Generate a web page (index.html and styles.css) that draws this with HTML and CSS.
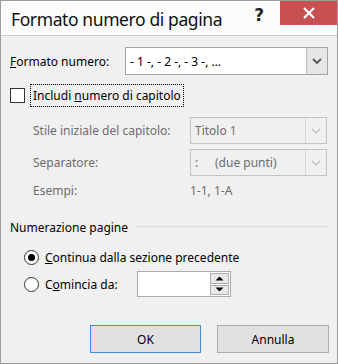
FILE: index.html
```html
<!DOCTYPE html>
<html lang="it">
<head>
<meta charset="utf-8">
<link rel="stylesheet" href="styles.css">
</head>
<body>
<div class="win">
  <div class="titlebar">
    <span class="title">Formato numero di pagina</span>
    <span class="help">?</span>
    <span class="close"><svg width="12" height="12" viewBox="0 0 12 12"><path d="M1 1L11 11M11 1L1 11" stroke="#fff" stroke-width="2.2" fill="none"/></svg></span>
  </div>
  <div class="content">
    <div class="row-format">
      <span class="lbl"><u>F</u>ormato numero:</span>
      <div class="combo">
        <span class="val">- 1 -, - 2 -, - 3 -, …</span>
        <span class="drop"><svg width="10" height="6" viewBox="0 0 10 6"><path d="M1 1L5 5L9 1" stroke="#555" stroke-width="1.8" fill="none"/></svg></span>
      </div>
    </div>
    <div class="row-check">
      <span class="checkbox"></span>
      <span class="focus"><span>Includi <u>n</u>umero di capitolo</span></span>
    </div>
    <div class="chap">
      <span class="dlbl">Stile iniziale del capitolo:</span>
      <div class="combo dis">
        <span class="val">Titolo 1</span>
        <span class="drop"><svg width="10" height="6" viewBox="0 0 10 6"><path d="M1 1L5 5L9 1" stroke="#c4c4c4" stroke-width="1.5" fill="none"/></svg></span>
      </div>
      <span class="dlbl">Separatore:</span>
      <div class="combo dis">
        <span class="val"><span class="colon">:</span>(due punti)</span>
        <span class="drop"><svg width="10" height="6" viewBox="0 0 10 6"><path d="M1 1L5 5L9 1" stroke="#c4c4c4" stroke-width="1.5" fill="none"/></svg></span>
      </div>
      <span class="dlbl">Esempi:</span>
      <span class="dlbl">1-1, 1-A</span>
    </div>
    <div class="group-head">
      <span class="gtitle">Numerazione pagine</span>
      <span class="gline"></span>
    </div>
    <div class="radios">
      <span class="radio on"></span>
      <span class="rlbl"><u>C</u>ontinua dalla sezione precedente</span>
      <span></span>
      <span class="radio"></span>
      <span class="rlbl">C<u>o</u>mincia da:</span>
      <div class="spin">
        <span class="spin-field"></span>
        <span class="spin-btns">
          <span class="sbtn"><svg width="9" height="5" viewBox="0 0 9 5"><path d="M0.5 4.5L4.5 0.5L8.5 4.5Z" fill="#000"/></svg></span>
          <span class="sbtn"><svg width="9" height="5" viewBox="0 0 9 5"><path d="M0.5 0.5L4.5 4.5L8.5 0.5Z" fill="#000"/></svg></span>
        </span>
      </div>
    </div>
    <div class="buttons">
      <span class="btn default">OK</span>
      <span class="btn">Annulla</span>
    </div>
  </div>
</div>
</body>
</html>
```
FILE: styles.css
```css
html, body {
  margin: 0;
  padding: 0;
  background: #f0f0f0;
}
body {
  font-family: "Noto Sans", "Open Sans", sans-serif;
  font-size: 12px;
  color: #000;
}
.win {
  width: 338px;
  height: 364px;
  box-sizing: border-box;
  border: 1px solid #9c9c9c;
  background: #f0f0f0;
  display: flex;
  flex-direction: column;
}
.titlebar {
  height: 34px;
  flex: none;
  background: #fbfbfb;
  border-bottom: 1px solid #cdcdcd;
  display: flex;
  align-items: flex-start;
}
.title {
  font-size: 17.5px;
  letter-spacing: -0.4px;
  line-height: 24px;
  margin: 6px 0 0 10px;
  color: #111;
  white-space: nowrap;
}
.help {
  font-family: "DejaVu Sans", sans-serif;
  font-weight: bold;
  font-size: 17px;
  line-height: 20px;
  margin: 4px 16px 0 auto;
  color: #222;
}
.close {
  width: 57px;
  height: 24px;
  background: #c75050;
  display: flex;
  align-items: center;
  justify-content: center;
}
.content {
  flex: 1;
  padding: 0 9px;
  display: flex;
  flex-direction: column;
}
.row-format {
  margin-top: 11px;
  height: 28px;
  display: flex;
  align-items: center;
}
.lbl {
  width: 115px;
  flex: none;
}
.combo {
  flex: 1;
  height: 28px;
  box-sizing: border-box;
  border: 1px solid #a5a5a5;
  background: #fff;
  display: flex;
  align-items: stretch;
}
.combo .val {
  flex: 1;
  padding-left: 4px;
  display: flex;
  align-items: center;
}
.combo .drop {
  width: 20px;
  border-left: 1px solid #bcbcbc;
  background: #e6e6e6;
  display: flex;
  align-items: center;
  justify-content: center;
}
.combo.dis {
  height: 27px;
  background: #f0f0f0;
  border-color: #c3c3c3;
  color: #6d6d6d;
}
.combo.dis .drop {
  background: #f0f0f0;
  border-left-color: #d6d6d6;
}
.colon {
  width: 20px;
  display: inline-block;
}
.row-check {
  margin-top: 9px;
  height: 23px;
  display: flex;
  align-items: center;
}
.checkbox {
  width: 15px;
  height: 15px;
  box-sizing: border-box;
  border: 1px solid #333;
  background: #fff;
}
.focus {
  margin-left: 5px;
  height: 23px;
  box-sizing: border-box;
  border: 1px dotted #000;
  padding: 0 2px;
  display: flex;
  align-items: center;
}
.chap {
  margin-top: 10px;
  padding-left: 23px;
  display: grid;
  grid-template-columns: 157px 137px;
  grid-template-rows: 27px 27px 18px;
  row-gap: 5px;
  align-items: center;
}
.dlbl {
  color: #6d6d6d;
}
.group-head {
  margin-top: 20px;
  height: 17px;
  display: flex;
  align-items: center;
}
.gline {
  flex: 1;
  height: 1px;
  background: #dcdcdc;
  margin: 0 0 3px 7px;
}
.radios {
  margin-top: 11px;
  padding-left: 14px;
  display: grid;
  grid-template-columns: 15px 86px 94px;
  grid-template-rows: 20px 26px;
  column-gap: 6px;
  row-gap: 4px;
  align-items: center;
}
.radio {
  width: 15px;
  height: 15px;
  box-sizing: border-box;
  border: 1px solid #333;
  border-radius: 50%;
  background: #fff;
  display: flex;
  align-items: center;
  justify-content: center;
}
.radio.on::after {
  content: "";
  width: 7px;
  height: 7px;
  border-radius: 50%;
  background: #000;
}
.rlbl {
  white-space: nowrap;
}
.spin {
  height: 26px;
  box-sizing: border-box;
  border: 1px solid #adadad;
  background: #fff;
  display: flex;
  padding: 1px;
}
.spin-field {
  flex: 1;
}
.spin-btns {
  width: 19px;
  display: flex;
  flex-direction: column;
  gap: 1px;
}
.sbtn {
  flex: 1;
  border: 1px solid #adadad;
  background: #e9e9e9;
  display: flex;
  align-items: center;
  justify-content: center;
}
.buttons {
  margin-top: 28px;
  display: flex;
  justify-content: flex-end;
  gap: 16px;
  margin-right: -1px;
}
.btn {
  width: 112px;
  height: 28px;
  box-sizing: border-box;
  border: 1px solid #adadad;
  background: #e1e1e1;
  display: flex;
  align-items: center;
  justify-content: center;
}
.btn.default {
  width: 111px;
  border-color: #3d8ee6;
}
```
